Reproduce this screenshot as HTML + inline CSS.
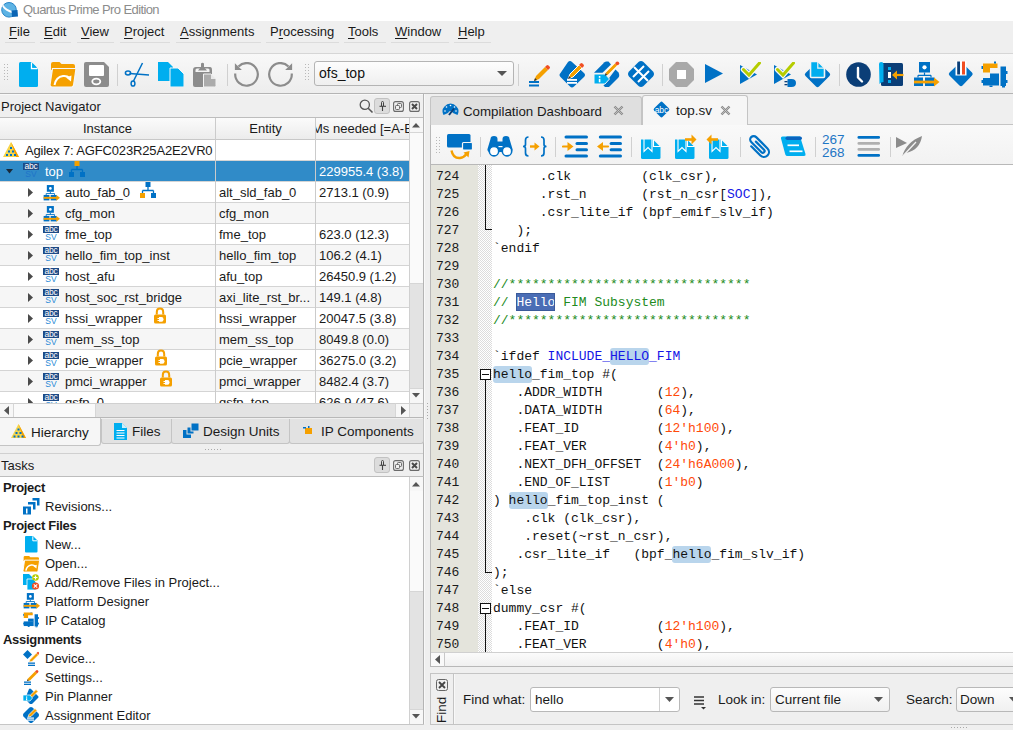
<!DOCTYPE html><html><head><meta charset="utf-8"><style>
*{box-sizing:border-box}
body{margin:0;width:1013px;height:730px;position:relative;overflow:hidden;background:#efefef;font-family:"Liberation Sans",sans-serif;font-size:13px;color:#1a1a1a}
.mono{font-family:"Liberation Mono",monospace;font-size:13px}
u{text-decoration:underline;text-decoration-thickness:1px;text-underline-offset:1.5px}
</style></head><body>
<div style="position:absolute;left:0px;top:0px;width:1013px;height:21px;background:#fff"></div>
<svg style="position:absolute;left:1px;top:1px" width="18" height="18" viewBox="0 0 18 18"><circle cx="8" cy="8.8" r="7.3" fill="#5db3e4" stroke="#2a86c8" stroke-width="1"/><path d="M2 3.5 Q5 8.5 12.5 10.5 L12 12.5 Q4.5 10.5 1.2 5.5Z" fill="#fff"/><path d="M10.5 9.5 L16.5 9 L17 15.5 L11 16Z" fill="#0a64b4"/></svg>
<div style="position:absolute;left:23px;top:1px;white-space:pre;font-size:13px;line-height:18px;color:#8c8c8c;letter-spacing:-0.6px">Quartus Prime Pro Edition</div>
<div style="position:absolute;left:0px;top:21px;width:1013px;height:32px;background:#efefef"></div>
<div style="position:absolute;left:9px;top:23px;white-space:pre;font-size:13px;line-height:17px;color:#1a1a1a"><u>F</u>ile</div>
<div style="position:absolute;left:44px;top:23px;white-space:pre;font-size:13px;line-height:17px;color:#1a1a1a"><u>E</u>dit</div>
<div style="position:absolute;left:81px;top:23px;white-space:pre;font-size:13px;line-height:17px;color:#1a1a1a"><u>V</u>iew</div>
<div style="position:absolute;left:124px;top:23px;white-space:pre;font-size:13px;line-height:17px;color:#1a1a1a"><u>P</u>roject</div>
<div style="position:absolute;left:180px;top:23px;white-space:pre;font-size:13px;line-height:17px;color:#1a1a1a"><u>A</u>ssignments</div>
<div style="position:absolute;left:270px;top:23px;white-space:pre;font-size:13px;line-height:17px;color:#1a1a1a">P<u>r</u>ocessing</div>
<div style="position:absolute;left:348px;top:23px;white-space:pre;font-size:13px;line-height:17px;color:#1a1a1a"><u>T</u>ools</div>
<div style="position:absolute;left:395px;top:23px;white-space:pre;font-size:13px;line-height:17px;color:#1a1a1a"><u>W</u>indow</div>
<div style="position:absolute;left:458px;top:23px;white-space:pre;font-size:13px;line-height:17px;color:#1a1a1a"><u>H</u>elp</div>
<div style="position:absolute;left:5px;top:42px;width:30px;height:1px;background:#dcdcdc"></div>
<div style="position:absolute;left:40px;top:42px;width:31px;height:1px;background:#dcdcdc"></div>
<div style="position:absolute;left:77px;top:42px;width:37px;height:1px;background:#dcdcdc"></div>
<div style="position:absolute;left:120px;top:42px;width:50px;height:1px;background:#dcdcdc"></div>
<div style="position:absolute;left:176px;top:42px;width:85px;height:1px;background:#dcdcdc"></div>
<div style="position:absolute;left:266px;top:42px;width:73px;height:1px;background:#dcdcdc"></div>
<div style="position:absolute;left:344px;top:42px;width:42px;height:1px;background:#dcdcdc"></div>
<div style="position:absolute;left:391px;top:42px;width:58px;height:1px;background:#dcdcdc"></div>
<div style="position:absolute;left:454px;top:42px;width:37px;height:1px;background:#dcdcdc"></div>
<div style="position:absolute;left:0px;top:53px;width:1013px;height:1px;background:#d6d6d6"></div>
<div style="position:absolute;left:0px;top:54px;width:1013px;height:39px;background:linear-gradient(#f8f8f8,#ededed)"></div>
<div style="position:absolute;left:0px;top:93px;width:1013px;height:1px;background:#b4b4b4"></div>
<svg style="position:absolute;left:4px;top:64px" width="4" height="18" viewBox="0 0 4 18"><rect x="0" y="0" width="1" height="1" fill="#b8b8b8"/><rect x="3" y="0" width="1" height="1" fill="#b8b8b8"/><rect x="0" y="3" width="1" height="1" fill="#b8b8b8"/><rect x="3" y="3" width="1" height="1" fill="#b8b8b8"/><rect x="0" y="6" width="1" height="1" fill="#b8b8b8"/><rect x="3" y="6" width="1" height="1" fill="#b8b8b8"/><rect x="0" y="9" width="1" height="1" fill="#b8b8b8"/><rect x="3" y="9" width="1" height="1" fill="#b8b8b8"/><rect x="0" y="12" width="1" height="1" fill="#b8b8b8"/><rect x="3" y="12" width="1" height="1" fill="#b8b8b8"/><rect x="0" y="15" width="1" height="1" fill="#b8b8b8"/><rect x="3" y="15" width="1" height="1" fill="#b8b8b8"/></svg>
<svg style="position:absolute;left:19px;top:62px" width="20" height="26" viewBox="0 0 20 26"><path d="M1.5 0 H12 L19 7 V23.5 Q19 25 17.5 25 H1.5 Q0 25 0 23.5 V1.5 Q0 0 1.5 0Z" fill="#00aeef"/><path d="M12.5 0.5 V6.5 H18.5" stroke="#fff" stroke-width="1.3" fill="none"/><path d="M13.3 0.8 L18.2 5.7 H13.3Z" fill="#00aeef"/></svg>
<svg style="position:absolute;left:50px;top:62px" width="27" height="26" viewBox="0 0 27 26"><path d="M1 2 Q1 0 3 0 H9.5 L11.5 2 H23 Q25 2 25 4 V8 H1Z" fill="#f5a000"/><path d="M2.5 6.5 H26 L23.5 23.5 Q23 25 21.5 25 H2 Q0 25 0 23Z" fill="#f5a000" stroke="#f6f6f6" stroke-width="1.2"/><path d="M4.5 23 Q6 15 13 14 Q17 13.5 19.5 16" stroke="#fff" stroke-width="2" fill="none"/><path d="M16 15.5 L21.5 13.5 L21 19.5Z" fill="#fff"/></svg>
<svg style="position:absolute;left:84px;top:62px" width="25" height="25" viewBox="0 0 25 25"><path d="M2 0 H20 L25 5 V23 Q25 25 23 25 H2 Q0 25 0 23 V2 Q0 0 2 0Z" fill="#8c8c8c"/><rect x="5" y="3" width="15" height="11" rx="1" fill="#fff"/><ellipse cx="12.3" cy="19.5" rx="4" ry="2.8" fill="none" stroke="#fff" stroke-width="1.8"/></svg>
<div style="position:absolute;left:117px;top:64px;width:1px;height:22px;background:#d0d0d0"></div>
<svg style="position:absolute;left:124px;top:61px" width="27" height="27" viewBox="0 0 27 27"><g stroke="#0071c5" stroke-width="1.5" fill="none"><path d="M18.5 2 L9.5 20"/><path d="M5.5 12.5 L25 14"/><ellipse cx="4" cy="12" rx="2.6" ry="1.9"/><ellipse cx="9" cy="22.5" rx="1.9" ry="2.6"/></g></svg>
<svg style="position:absolute;left:158px;top:62px" width="26" height="25" viewBox="0 0 26 25"><path d="M0 0 H10 L15 5 V19 H0Z" fill="#00aeef"/><path d="M12 6 H20 L26 12 V25 H12Z" fill="#00aeef" stroke="#f6f6f6" stroke-width="1"/></svg>
<svg style="position:absolute;left:192px;top:62px" width="25" height="25" viewBox="0 0 25 25"><path d="M1 8 Q1 5 4 5 H18 Q20 5 20 8 V23 Q20 25 18 25 H3 Q1 25 1 23Z" fill="#8c8c8c"/><path d="M3.5 8 Q3.5 6.5 5 6.5 H16 Q17.5 6.5 17.5 8 V10 H3.5Z" fill="#f4f4f4"/><path d="M6 8.5 L9 5 V1.5 Q10.5 0 12 1.5 V5 L15 8.5Z" fill="#8c8c8c"/><path d="M11.5 12 H19 L24 17 V23.5 Q24 25 22.5 25 H11.5Z" fill="#ababab" stroke="#f2f2f2" stroke-width="1"/><path d="M19 12 V17 H24" fill="#e8e8e8"/></svg>
<div style="position:absolute;left:227px;top:64px;width:1px;height:22px;background:#d0d0d0"></div>
<svg style="position:absolute;left:233px;top:62px" width="27" height="26" viewBox="0 0 27 26"><path d="M2.24 11.5 A11.3 11.3 0 1 0 5.51 4.41" stroke="#8c8c8c" stroke-width="2.2" fill="none"/><path d="M1.9 1.3 L1.9 7.9 L8.9 7.9Z" fill="#8c8c8c"/></svg>
<svg style="position:absolute;left:267px;top:62px" width="27" height="26" viewBox="0 0 27 26"><path d="M24.76 11.5 A11.3 11.3 0 1 1 21.49 4.41" stroke="#8c8c8c" stroke-width="2.2" fill="none"/><path d="M25.1 1.3 L25.1 7.9 L18.1 7.9Z" fill="#8c8c8c"/></svg>
<svg style="position:absolute;left:305px;top:64px" width="4" height="18" viewBox="0 0 4 18"><rect x="0" y="0" width="1" height="1" fill="#b8b8b8"/><rect x="3" y="0" width="1" height="1" fill="#b8b8b8"/><rect x="0" y="3" width="1" height="1" fill="#b8b8b8"/><rect x="3" y="3" width="1" height="1" fill="#b8b8b8"/><rect x="0" y="6" width="1" height="1" fill="#b8b8b8"/><rect x="3" y="6" width="1" height="1" fill="#b8b8b8"/><rect x="0" y="9" width="1" height="1" fill="#b8b8b8"/><rect x="3" y="9" width="1" height="1" fill="#b8b8b8"/><rect x="0" y="12" width="1" height="1" fill="#b8b8b8"/><rect x="3" y="12" width="1" height="1" fill="#b8b8b8"/><rect x="0" y="15" width="1" height="1" fill="#b8b8b8"/><rect x="3" y="15" width="1" height="1" fill="#b8b8b8"/></svg>
<div style="position:absolute;left:314px;top:61px;width:200px;height:25px;background:linear-gradient(#fdfdfd,#efefef);border:1px solid #b4b4b4;border-radius:3px"></div>
<div style="position:absolute;left:319px;top:65px;white-space:pre;font-size:14px;line-height:16px;color:#111">ofs_top</div>
<svg style="position:absolute;left:497px;top:71px" width="10" height="6" viewBox="0 0 10 6"><path d="M0 0 H10 L5 5Z" fill="#555"/></svg>
<div style="position:absolute;left:518px;top:64px;width:1px;height:22px;background:#d0d0d0"></div>
<svg style="position:absolute;left:528px;top:62px" width="22" height="25" viewBox="0 0 22 25"><g transform="translate(6,5) scale(1)"><path d="M0 14 L2 9 L11 0 L14 3 L5 12Z" fill="#f5a000" /><path d="M11 0 L12.5 -1.5 Q13.5 -2.5 14.5 -1.5 L15.5 -0.5 Q16.5 0.5 15.5 1.5 L14 3Z" fill="#f04e23"/><path d="M0 14 L1 11 L3 13Z" fill="#333"/></g><rect x="1" y="19" width="10" height="2" fill="#0071c5"/><rect x="1" y="22.5" width="10" height="2" fill="#0071c5"/></svg>
<svg style="position:absolute;left:559px;top:61px" width="27" height="27" viewBox="0 0 27 27"><path d="M9 1 Q11 -1 13 1 L25 12 Q27 14 25 16 L15 25.5 Q13 27.5 11 25.5 L1.5 16 Q-0.5 14 1.5 12Z" fill="#0071c5"/><g transform="translate(9,4) scale(1)"><path d="M0 14 L2 9 L11 0 L14 3 L5 12Z" fill="#f5a000" stroke="#fff" stroke-width="1"/><path d="M11 0 L12.5 -1.5 Q13.5 -2.5 14.5 -1.5 L15.5 -0.5 Q16.5 0.5 15.5 1.5 L14 3Z" fill="#f04e23"/><path d="M0 14 L1 11 L3 13Z" fill="#333"/></g><rect x="8" y="18" width="10" height="1.8" fill="#fff"/><rect x="8" y="21" width="10" height="1.8" fill="#fff"/></svg>
<svg style="position:absolute;left:590px;top:58px" width="32" height="32" viewBox="0 0 32 32"><path d="M4 14.8 L14.5 4.2 Q15.3 3.5 16.5 3.5 H18.5 L21 6.5 L12.5 14.8Z" fill="#0071c5"/><path d="M13.5 27.5 L25.5 11.5 L28.5 14.5 Q29.2 15.5 29.2 17 V18 Q29 19 28 20 L19.5 28.5 Q18.8 29 17.8 29 H15Z" fill="#0071c5"/><path d="M4 16 H15 L19.5 21 L15 26 H4Z" fill="#00aeef" stroke="#f4f4f4" stroke-width="1"/><rect x="8.8" y="18" width="1.6" height="1.8" fill="#fff"/><rect x="8.8" y="20.8" width="1.6" height="3.5" fill="#fff"/><path d="M16 16.5 L26 6.5" stroke="#fff" stroke-width="5"/><path d="M16.5 16 L26 6.5" stroke="#f5a000" stroke-width="3"/><circle cx="27.3" cy="5.3" r="1.9" fill="#f04e23"/><path d="M14.8 17.8 L15.5 15 L17.5 17Z" fill="#333"/></svg>
<svg style="position:absolute;left:628px;top:61px" width="26" height="27" viewBox="0 0 26 27"><path d="M10.5 1 Q13 -1 15.5 1 L25 10.5 Q27 13 25 15.5 L15.5 25 Q13 27 10.5 25 L1 15.5 Q-1 13 1 10.5Z" fill="#0071c5"/><path d="M6 6 L20 20 M5 16 L16 5 M10 21 L21 10" stroke="#fff" stroke-width="2"/></svg>
<div style="position:absolute;left:662px;top:64px;width:1px;height:22px;background:#d0d0d0"></div>
<svg style="position:absolute;left:669px;top:62px" width="25" height="25" viewBox="0 0 25 25"><path d="M7 0 H18 L25 7 V18 L18 25 H7 L0 18 V7Z" fill="#a9a9a9"/><rect x="8" y="8" width="9" height="9" fill="#fff"/></svg>
<svg style="position:absolute;left:705px;top:64px" width="19" height="20" viewBox="0 0 19 20"><path d="M0 0 L18 9.5 L0 19Z" fill="#0071c5"/></svg>
<svg style="position:absolute;left:739px;top:62px" width="25" height="26" viewBox="0 0 25 26"><path d="M1 3 L1 22 L18 12.5 Z" fill="#0071c5"/><path d="M4.5 7.5 L10 13 L20.5 1" stroke="#f6f6f6" stroke-width="5.5" fill="none" stroke-linecap="round"/><path d="M4.5 7.5 L10 13 L20.5 1" stroke="#b5cc00" stroke-width="3" fill="none" stroke-linecap="round"/></svg>
<svg style="position:absolute;left:773px;top:62px" width="25" height="26" viewBox="0 0 25 26"><path d="M1 3 L1 22 L18 12.5 Z" fill="#0071c5"/><path d="M4.5 7.5 L10 13 L20.5 1" stroke="#f6f6f6" stroke-width="5.5" fill="none" stroke-linecap="round"/><path d="M4.5 7.5 L10 13 L20.5 1" stroke="#b5cc00" stroke-width="3" fill="none" stroke-linecap="round"/><path d="M14.5 17 H18.5 Q23 17 23 21 Q23 25 18.5 25 H14.5Z" fill="#0071c5"/><rect x="11.5" y="19" width="3" height="1.3" fill="#0b3e77"/><rect x="11.5" y="22" width="3" height="1.3" fill="#0b3e77"/></svg>
<svg style="position:absolute;left:804px;top:58px" width="28" height="32" viewBox="0 0 28 32"><path d="M12 5 Q13.5 3.5 15 5 L25.5 15 Q27 16.5 25.5 18 L15 28.5 Q13.5 30 12 28.5 L1.5 18 Q0 16.5 1.5 15Z" fill="#0071c5"/><path d="M6.5 3.5 H14 L20.5 10 V18.5 Q20.5 19.5 19.5 19.5 H7.5 Q6.5 19.5 6.5 18.5Z" fill="#00aeef" stroke="#f4f4f4" stroke-width="1.6"/><path d="M13.8 3.5 V10.2 H20.5" stroke="#f4f4f4" stroke-width="1.2" fill="none"/></svg>
<div style="position:absolute;left:839px;top:64px;width:1px;height:22px;background:#d0d0d0"></div>
<svg style="position:absolute;left:846px;top:62px" width="26" height="25" viewBox="0 0 26 25"><circle cx="12.5" cy="12.5" r="12.3" fill="#0b3e77"/><path d="M12 6 V15.5 L16 19.5" stroke="#fff" stroke-width="2.4" fill="none" stroke-linecap="round" stroke-linejoin="round"/></svg>
<svg style="position:absolute;left:879px;top:62px" width="26" height="25" viewBox="0 0 26 25"><rect x="2" y="1" width="22" height="23" rx="1.5" fill="#0b3e77"/><path d="M0 2 Q0 0 2.2 0 Q4.5 0 4.5 2 V20 Q2 20 0.5 22Z" fill="#00aeef"/><rect x="9" y="5" width="3" height="3" fill="#00aeef"/><rect x="9" y="10" width="3" height="6" fill="#fff"/><rect x="9" y="18" width="3" height="3" fill="#00aeef"/><path d="M16 13 H24.5" stroke="#f5a000" stroke-width="2.2"/><path d="M13 13 L18 8.5 V17.5Z" fill="#f5a000"/></svg>
<svg style="position:absolute;left:913px;top:61px" width="27" height="27" viewBox="0 0 27 27"><rect x="6" y="1" width="11" height="10.5" fill="#0071c5"/><circle cx="11.5" cy="6.3" r="2.1" fill="#fff"/><path d="M11.5 11.5 V14.3 M5 14.3 H18 M5 14.3 V16.5 M18 14.3 V16.5" stroke="#0071c5" stroke-width="1.2" fill="none"/><rect x="1" y="16.5" width="9" height="8.5" fill="#0071c5"/><rect x="12" y="16.5" width="9.5" height="8.5" fill="#0071c5"/><path d="M1 21 H22" stroke="#f5a000" stroke-width="2.8"/><path d="M21 16.5 L26.5 21 L21 25.5Z" fill="#f5a000"/></svg>
<svg style="position:absolute;left:947px;top:58px" width="28" height="30" viewBox="0 0 28 30"><path d="M12.5 5 Q14 3.5 15.5 5 L25 14.5 Q26.5 16 25 17.5 L15.5 27.5 Q14 29 12.5 27.5 L2.5 17.5 Q1 16 2.5 14.5Z" fill="#0071c5"/><rect x="8.5" y="3" width="11" height="14.5" fill="#fff"/><rect x="10.2" y="3.5" width="2.8" height="13" fill="#0b3e77"/><rect x="15" y="3.5" width="3" height="13" fill="#f04e23"/></svg>
<svg style="position:absolute;left:981px;top:58px" width="28" height="32" viewBox="0 0 28 32"><path d="M2 5.5 H16.5 V10 H9 V14.5 H2Z" fill="#f5a000"/><rect x="19.5" y="8.5" width="5.5" height="19.5" fill="#0071c5"/><rect x="2" y="20" width="16" height="7.5" fill="#0071c5"/><rect x="9" y="15.5" width="9" height="5" fill="#0071c5"/><g fill="#0071c5"><rect x="25" y="13" width="1.5" height="3"/><rect x="25" y="22" width="1.5" height="3"/><rect x="0.5" y="22" width="1.5" height="3"/><rect x="8.5" y="27.5" width="3" height="1.5"/><rect x="21" y="28" width="3" height="1.5"/><rect x="13" y="3.5" width="2" height="2"/></g><rect x="0.5" y="8" width="1.5" height="3" fill="#0071c5"/></svg>
<div style="position:absolute;left:0px;top:94px;width:423px;height:1px;background:#f8f8f8"></div>
<div style="position:absolute;left:0px;top:95px;width:423px;height:22px;background:#efefef"></div>
<div style="position:absolute;left:1px;top:99px;white-space:pre;font-size:13px;line-height:16px;color:#1a1a1a">Project Navigator</div>
<div style="position:absolute;left:423px;top:94px;width:1px;height:630px;background:#b4b4b4"></div>
<div style="position:absolute;left:424px;top:94px;width:1px;height:630px;background:#f8f8f8"></div>
<svg style="position:absolute;left:359px;top:99px" width="15" height="15" viewBox="0 0 15 15"><circle cx="5.8" cy="5.8" r="4.6" stroke="#555" stroke-width="1.3" fill="none"/><path d="M9.2 9.2 L13.5 13.5" stroke="#555" stroke-width="1.6"/></svg><div style="position:absolute;left:374px;top:98px;width:16px;height:16px;background:#dcdcdc;border:1px solid #c2c2c2;border-radius:3px"></div><svg style="position:absolute;left:379px;top:101px" width="8" height="10" viewBox="0 0 8 10"><path d="M3.5 5 V10" stroke="#444" stroke-width="1.1"/><path d="M0.5 5.3 H7" stroke="#444" stroke-width="1.1"/><path d="M2.5 5 V1.5 Q2.5 0.5 3.5 0.5 Q4.5 0.5 4.5 1.5 V5" stroke="#444" stroke-width="1" fill="none"/></svg><svg style="position:absolute;left:393px;top:101px" width="11" height="11" viewBox="0 0 11 11"><rect x="0.6" y="0.6" width="9.8" height="9.8" rx="2" fill="none" stroke="#6a6a6a" stroke-width="1.1"/><rect x="4.5" y="2.5" width="4" height="4" rx=".8" fill="none" stroke="#6a6a6a" stroke-width="1"/><rect x="2.5" y="4.5" width="4" height="4" rx=".8" fill="#efefef" stroke="#6a6a6a" stroke-width="1"/></svg><svg style="position:absolute;left:409px;top:101px" width="11" height="11" viewBox="0 0 11 11"><rect x="0.6" y="0.6" width="9.8" height="9.8" rx="2" fill="none" stroke="#6a6a6a" stroke-width="1.1"/><path d="M3 3 L8 8 M8 3 L3 8" stroke="#4a4a4a" stroke-width="2"/></svg>
<div style="position:absolute;left:0px;top:117px;width:423px;height:1px;background:#bdbdbd"></div>
<div style="position:absolute;left:0px;top:118px;width:409px;height:21px;background:linear-gradient(#fbfbfb,#ececec)"></div>
<div style="position:absolute;left:0px;top:139px;width:409px;height:1px;background:#c8c8c8"></div>
<div style="position:absolute;left:215px;top:118px;width:1px;height:285px;background:#cbcbcb"></div>
<div style="position:absolute;left:315px;top:118px;width:1px;height:285px;background:#cbcbcb"></div>
<div style="position:absolute;left:0px;top:121px;white-space:pre;width:215px;text-align:center;font-size:13px;line-height:16px">Instance</div>
<div style="position:absolute;left:216px;top:121px;white-space:pre;width:99px;text-align:center;font-size:13px;line-height:16px">Entity</div>
<div style="position:absolute;left:316px;top:118px;width:93px;height:21px;overflow:hidden"><div style="position:absolute;left:-4px;top:3px;white-space:pre;line-height:16px">Ms needed [=A-B]</div></div>
<div style="position:absolute;left:0px;top:140px;width:409px;height:263px;overflow:hidden"></div>
<div style="position:absolute;left:0;top:0;width:409px;height:403px;overflow:hidden;clip-path:inset(140px 0 0 0)"><div style="position:absolute;left:0px;top:140px;width:409px;height:20px;background:#ffffff"></div><div style="position:absolute;left:0px;top:160px;width:409px;height:1px;background:#d4d4d4"></div><svg style="position:absolute;left:3px;top:142px" width="17" height="16" viewBox="0 0 17 16"><path d="M8 0 L16 15 H0Z" fill="#f7d54a"/><path d="M8 0 L16 15 H13Z" fill="#f5a000"/><g fill="#0071c5"><rect x="7" y="5" width="2" height="2"/><rect x="5" y="8.5" width="2" height="2"/><rect x="9" y="8.5" width="2" height="2"/><rect x="3" y="12" width="2" height="2"/><rect x="7" y="12" width="2" height="2"/><rect x="11" y="12" width="2" height="2"/></g></svg><div style="position:absolute;left:25px;top:142px;white-space:pre;line-height:17px;color:#1a1a1a;letter-spacing:-0.15px">Agilex 7: AGFC023R25A2E2VR0</div><div style="position:absolute;left:215px;top:140px;width:1px;height:21px;background:#cbcbcb"></div><div style="position:absolute;left:315px;top:140px;width:1px;height:21px;background:#cbcbcb"></div><div style="position:absolute;left:0px;top:161px;width:409px;height:20px;background:#308bc8"></div><div style="position:absolute;left:0px;top:181px;width:409px;height:1px;background:#d4d4d4"></div><svg style="position:absolute;left:6px;top:169px" width="8" height="5" viewBox="0 0 8 5"><path d="M0 0 H7 L3.5 4.5Z" fill="#1a2a3a"/></svg><svg style="position:absolute;left:23px;top:163px" width="16" height="16" viewBox="0 0 16 16"><rect x="0" y="0" width="16" height="7" fill="#1d4a86"/><text x="8" y="6.3" font-family="Liberation Sans" font-size="8.5" fill="#fff" text-anchor="middle" letter-spacing="-0.2">abc</text><text x="8" y="14" font-family="Liberation Sans" font-size="8.5" fill="#1f74c8" text-anchor="middle">SV</text></svg><div style="position:absolute;left:45px;top:163px;white-space:pre;line-height:17px;color:#fff">top</div><svg style="position:absolute;left:69px;top:161px" width="16" height="17" viewBox="0 0 16 17"><rect x="5.5" y="0" width="5" height="5" fill="#f5a000"/><path d="M8 5 V8.5 M2.5 8.5 H13.5 M2.5 8.5 V11 M13.5 8.5 V11" stroke="#0071c5" stroke-width="1.3" fill="none"/><rect x="0" y="11" width="5" height="5" fill="#0071c5"/><rect x="11" y="11" width="5" height="5" fill="#0071c5"/></svg><div style="position:absolute;left:319px;top:163px;white-space:pre;line-height:17px;color:#fff">229955.4 (3.8)</div><div style="position:absolute;left:215px;top:161px;width:1px;height:21px;background:#cbcbcb"></div><div style="position:absolute;left:315px;top:161px;width:1px;height:21px;background:#cbcbcb"></div><div style="position:absolute;left:0px;top:182px;width:409px;height:20px;background:#ffffff"></div><div style="position:absolute;left:0px;top:202px;width:409px;height:1px;background:#d4d4d4"></div><svg style="position:absolute;left:28px;top:188px" width="5" height="9" viewBox="0 0 5 9"><path d="M0 0 L5 4.5 L0 9Z" fill="#4a4a4a"/></svg><svg style="position:absolute;left:43px;top:185px" width="17" height="17" viewBox="0 0 17 17"><g transform="translate(0,-0.6) scale(0.64)"><rect x="6" y="1" width="11" height="10.5" fill="#0071c5"/><circle cx="11.5" cy="6.3" r="2.1" fill="#fff"/><path d="M11.5 11.5 V14.3 M5 14.3 H18 M5 14.3 V16.5 M18 14.3 V16.5" stroke="#0071c5" stroke-width="1.4" fill="none"/><rect x="1" y="16.5" width="9" height="8.5" fill="#0071c5"/><rect x="12" y="16.5" width="9.5" height="8.5" fill="#0071c5"/><path d="M1 21 H22" stroke="#f5a000" stroke-width="3"/><path d="M21 16.5 L26.5 21 L21 25.5Z" fill="#f5a000"/></g></svg><div style="position:absolute;left:65px;top:184px;white-space:pre;line-height:17px;color:#1a1a1a">auto_fab_0</div><svg style="position:absolute;left:140px;top:182px" width="16" height="17" viewBox="0 0 16 17"><rect x="5.5" y="0" width="5" height="5" fill="#0071c5"/><path d="M8 5 V8.5 M2.5 8.5 H13.5 M2.5 8.5 V11 M13.5 8.5 V11" stroke="#0071c5" stroke-width="1.3" fill="none"/><rect x="0" y="11" width="5" height="5" fill="#f5a000"/><rect x="11" y="11" width="5" height="5" fill="#0071c5"/></svg><div style="position:absolute;left:219px;top:184px;white-space:pre;line-height:17px;color:#1a1a1a">alt_sld_fab_0</div><div style="position:absolute;left:319px;top:184px;white-space:pre;line-height:17px;color:#1a1a1a">2713.1 (0.9)</div><div style="position:absolute;left:215px;top:182px;width:1px;height:21px;background:#cbcbcb"></div><div style="position:absolute;left:315px;top:182px;width:1px;height:21px;background:#cbcbcb"></div><div style="position:absolute;left:0px;top:203px;width:409px;height:20px;background:#f6f6f6"></div><div style="position:absolute;left:0px;top:223px;width:409px;height:1px;background:#d4d4d4"></div><svg style="position:absolute;left:28px;top:209px" width="5" height="9" viewBox="0 0 5 9"><path d="M0 0 L5 4.5 L0 9Z" fill="#4a4a4a"/></svg><svg style="position:absolute;left:43px;top:206px" width="17" height="17" viewBox="0 0 17 17"><g transform="translate(0,-0.6) scale(0.64)"><rect x="6" y="1" width="11" height="10.5" fill="#0071c5"/><circle cx="11.5" cy="6.3" r="2.1" fill="#fff"/><path d="M11.5 11.5 V14.3 M5 14.3 H18 M5 14.3 V16.5 M18 14.3 V16.5" stroke="#0071c5" stroke-width="1.4" fill="none"/><rect x="1" y="16.5" width="9" height="8.5" fill="#0071c5"/><rect x="12" y="16.5" width="9.5" height="8.5" fill="#0071c5"/><path d="M1 21 H22" stroke="#f5a000" stroke-width="3"/><path d="M21 16.5 L26.5 21 L21 25.5Z" fill="#f5a000"/></g></svg><div style="position:absolute;left:65px;top:205px;white-space:pre;line-height:17px;color:#1a1a1a">cfg_mon</div><div style="position:absolute;left:219px;top:205px;white-space:pre;line-height:17px;color:#1a1a1a">cfg_mon</div><div style="position:absolute;left:215px;top:203px;width:1px;height:21px;background:#cbcbcb"></div><div style="position:absolute;left:315px;top:203px;width:1px;height:21px;background:#cbcbcb"></div><div style="position:absolute;left:0px;top:224px;width:409px;height:20px;background:#ffffff"></div><div style="position:absolute;left:0px;top:244px;width:409px;height:1px;background:#d4d4d4"></div><svg style="position:absolute;left:28px;top:230px" width="5" height="9" viewBox="0 0 5 9"><path d="M0 0 L5 4.5 L0 9Z" fill="#4a4a4a"/></svg><svg style="position:absolute;left:43px;top:226px" width="16" height="16" viewBox="0 0 16 16"><rect x="0" y="0" width="16" height="7" fill="#1d4a86"/><text x="8" y="6.3" font-family="Liberation Sans" font-size="8.5" fill="#fff" text-anchor="middle" letter-spacing="-0.2">abc</text><text x="8" y="14" font-family="Liberation Sans" font-size="8.5" fill="#2a8ad6" text-anchor="middle">SV</text></svg><div style="position:absolute;left:65px;top:226px;white-space:pre;line-height:17px;color:#1a1a1a">fme_top</div><div style="position:absolute;left:219px;top:226px;white-space:pre;line-height:17px;color:#1a1a1a">fme_top</div><div style="position:absolute;left:319px;top:226px;white-space:pre;line-height:17px;color:#1a1a1a">623.0 (12.3)</div><div style="position:absolute;left:215px;top:224px;width:1px;height:21px;background:#cbcbcb"></div><div style="position:absolute;left:315px;top:224px;width:1px;height:21px;background:#cbcbcb"></div><div style="position:absolute;left:0px;top:245px;width:409px;height:20px;background:#f6f6f6"></div><div style="position:absolute;left:0px;top:265px;width:409px;height:1px;background:#d4d4d4"></div><svg style="position:absolute;left:28px;top:251px" width="5" height="9" viewBox="0 0 5 9"><path d="M0 0 L5 4.5 L0 9Z" fill="#4a4a4a"/></svg><svg style="position:absolute;left:43px;top:247px" width="16" height="16" viewBox="0 0 16 16"><rect x="0" y="0" width="16" height="7" fill="#1d4a86"/><text x="8" y="6.3" font-family="Liberation Sans" font-size="8.5" fill="#fff" text-anchor="middle" letter-spacing="-0.2">abc</text><text x="8" y="14" font-family="Liberation Sans" font-size="8.5" fill="#2a8ad6" text-anchor="middle">SV</text></svg><div style="position:absolute;left:65px;top:247px;white-space:pre;line-height:17px;color:#1a1a1a">hello_fim_top_inst</div><div style="position:absolute;left:219px;top:247px;white-space:pre;line-height:17px;color:#1a1a1a">hello_fim_top</div><div style="position:absolute;left:319px;top:247px;white-space:pre;line-height:17px;color:#1a1a1a">106.2 (4.1)</div><div style="position:absolute;left:215px;top:245px;width:1px;height:21px;background:#cbcbcb"></div><div style="position:absolute;left:315px;top:245px;width:1px;height:21px;background:#cbcbcb"></div><div style="position:absolute;left:0px;top:266px;width:409px;height:20px;background:#ffffff"></div><div style="position:absolute;left:0px;top:286px;width:409px;height:1px;background:#d4d4d4"></div><svg style="position:absolute;left:28px;top:272px" width="5" height="9" viewBox="0 0 5 9"><path d="M0 0 L5 4.5 L0 9Z" fill="#4a4a4a"/></svg><svg style="position:absolute;left:43px;top:268px" width="16" height="16" viewBox="0 0 16 16"><rect x="0" y="0" width="16" height="7" fill="#1d4a86"/><text x="8" y="6.3" font-family="Liberation Sans" font-size="8.5" fill="#fff" text-anchor="middle" letter-spacing="-0.2">abc</text><text x="8" y="14" font-family="Liberation Sans" font-size="8.5" fill="#2a8ad6" text-anchor="middle">SV</text></svg><div style="position:absolute;left:65px;top:268px;white-space:pre;line-height:17px;color:#1a1a1a">host_afu</div><div style="position:absolute;left:219px;top:268px;white-space:pre;line-height:17px;color:#1a1a1a">afu_top</div><div style="position:absolute;left:319px;top:268px;white-space:pre;line-height:17px;color:#1a1a1a">26450.9 (1.2)</div><div style="position:absolute;left:215px;top:266px;width:1px;height:21px;background:#cbcbcb"></div><div style="position:absolute;left:315px;top:266px;width:1px;height:21px;background:#cbcbcb"></div><div style="position:absolute;left:0px;top:287px;width:409px;height:20px;background:#f6f6f6"></div><div style="position:absolute;left:0px;top:307px;width:409px;height:1px;background:#d4d4d4"></div><svg style="position:absolute;left:28px;top:293px" width="5" height="9" viewBox="0 0 5 9"><path d="M0 0 L5 4.5 L0 9Z" fill="#4a4a4a"/></svg><svg style="position:absolute;left:43px;top:289px" width="16" height="16" viewBox="0 0 16 16"><rect x="0" y="0" width="16" height="7" fill="#1d4a86"/><text x="8" y="6.3" font-family="Liberation Sans" font-size="8.5" fill="#fff" text-anchor="middle" letter-spacing="-0.2">abc</text><text x="8" y="14" font-family="Liberation Sans" font-size="8.5" fill="#2a8ad6" text-anchor="middle">SV</text></svg><div style="position:absolute;left:65px;top:289px;white-space:pre;line-height:17px;color:#1a1a1a">host_soc_rst_bridge</div><div style="position:absolute;left:219px;top:289px;white-space:pre;line-height:17px;color:#1a1a1a">axi_lite_rst_br...</div><div style="position:absolute;left:319px;top:289px;white-space:pre;line-height:17px;color:#1a1a1a">149.1 (4.8)</div><div style="position:absolute;left:215px;top:287px;width:1px;height:21px;background:#cbcbcb"></div><div style="position:absolute;left:315px;top:287px;width:1px;height:21px;background:#cbcbcb"></div><div style="position:absolute;left:0px;top:308px;width:409px;height:20px;background:#ffffff"></div><div style="position:absolute;left:0px;top:328px;width:409px;height:1px;background:#d4d4d4"></div><svg style="position:absolute;left:28px;top:314px" width="5" height="9" viewBox="0 0 5 9"><path d="M0 0 L5 4.5 L0 9Z" fill="#4a4a4a"/></svg><svg style="position:absolute;left:43px;top:310px" width="16" height="16" viewBox="0 0 16 16"><rect x="0" y="0" width="16" height="7" fill="#1d4a86"/><text x="8" y="6.3" font-family="Liberation Sans" font-size="8.5" fill="#fff" text-anchor="middle" letter-spacing="-0.2">abc</text><text x="8" y="14" font-family="Liberation Sans" font-size="8.5" fill="#2a8ad6" text-anchor="middle">SV</text></svg><div style="position:absolute;left:65px;top:310px;white-space:pre;line-height:17px;color:#1a1a1a">hssi_wrapper</div><svg style="position:absolute;left:153px;top:307px" width="14" height="17" viewBox="0 0 14 17"><path d="M3.8 7.5 V5 Q3.8 1.6 7 1.6 Q10.2 1.6 10.2 5 V7.5" stroke="#f5a000" stroke-width="2" fill="none"/><rect x="1" y="7.5" width="12" height="9" rx="1.5" fill="#f5a000"/><path d="M6 10 H8.5 Q10.5 10 10.5 12.3 Q10.5 14.8 8.5 14.8 H6Z" fill="#fff"/><rect x="4.5" y="11" width="1.6" height="1" fill="#fff"/><rect x="4.5" y="13" width="1.6" height="1" fill="#fff"/></svg><div style="position:absolute;left:219px;top:310px;white-space:pre;line-height:17px;color:#1a1a1a">hssi_wrapper</div><div style="position:absolute;left:319px;top:310px;white-space:pre;line-height:17px;color:#1a1a1a">20047.5 (3.8)</div><div style="position:absolute;left:215px;top:308px;width:1px;height:21px;background:#cbcbcb"></div><div style="position:absolute;left:315px;top:308px;width:1px;height:21px;background:#cbcbcb"></div><div style="position:absolute;left:0px;top:329px;width:409px;height:20px;background:#f6f6f6"></div><div style="position:absolute;left:0px;top:349px;width:409px;height:1px;background:#d4d4d4"></div><svg style="position:absolute;left:28px;top:335px" width="5" height="9" viewBox="0 0 5 9"><path d="M0 0 L5 4.5 L0 9Z" fill="#4a4a4a"/></svg><svg style="position:absolute;left:43px;top:331px" width="16" height="16" viewBox="0 0 16 16"><rect x="0" y="0" width="16" height="7" fill="#1d4a86"/><text x="8" y="6.3" font-family="Liberation Sans" font-size="8.5" fill="#fff" text-anchor="middle" letter-spacing="-0.2">abc</text><text x="8" y="14" font-family="Liberation Sans" font-size="8.5" fill="#2a8ad6" text-anchor="middle">SV</text></svg><div style="position:absolute;left:65px;top:331px;white-space:pre;line-height:17px;color:#1a1a1a">mem_ss_top</div><div style="position:absolute;left:219px;top:331px;white-space:pre;line-height:17px;color:#1a1a1a">mem_ss_top</div><div style="position:absolute;left:319px;top:331px;white-space:pre;line-height:17px;color:#1a1a1a">8049.8 (0.0)</div><div style="position:absolute;left:215px;top:329px;width:1px;height:21px;background:#cbcbcb"></div><div style="position:absolute;left:315px;top:329px;width:1px;height:21px;background:#cbcbcb"></div><div style="position:absolute;left:0px;top:350px;width:409px;height:20px;background:#ffffff"></div><div style="position:absolute;left:0px;top:370px;width:409px;height:1px;background:#d4d4d4"></div><svg style="position:absolute;left:28px;top:356px" width="5" height="9" viewBox="0 0 5 9"><path d="M0 0 L5 4.5 L0 9Z" fill="#4a4a4a"/></svg><svg style="position:absolute;left:43px;top:352px" width="16" height="16" viewBox="0 0 16 16"><rect x="0" y="0" width="16" height="7" fill="#1d4a86"/><text x="8" y="6.3" font-family="Liberation Sans" font-size="8.5" fill="#fff" text-anchor="middle" letter-spacing="-0.2">abc</text><text x="8" y="14" font-family="Liberation Sans" font-size="8.5" fill="#2a8ad6" text-anchor="middle">SV</text></svg><div style="position:absolute;left:65px;top:352px;white-space:pre;line-height:17px;color:#1a1a1a">pcie_wrapper</div><svg style="position:absolute;left:154px;top:349px" width="14" height="17" viewBox="0 0 14 17"><path d="M3.8 7.5 V5 Q3.8 1.6 7 1.6 Q10.2 1.6 10.2 5 V7.5" stroke="#f5a000" stroke-width="2" fill="none"/><rect x="1" y="7.5" width="12" height="9" rx="1.5" fill="#f5a000"/><path d="M6 10 H8.5 Q10.5 10 10.5 12.3 Q10.5 14.8 8.5 14.8 H6Z" fill="#fff"/><rect x="4.5" y="11" width="1.6" height="1" fill="#fff"/><rect x="4.5" y="13" width="1.6" height="1" fill="#fff"/></svg><div style="position:absolute;left:219px;top:352px;white-space:pre;line-height:17px;color:#1a1a1a">pcie_wrapper</div><div style="position:absolute;left:319px;top:352px;white-space:pre;line-height:17px;color:#1a1a1a">36275.0 (3.2)</div><div style="position:absolute;left:215px;top:350px;width:1px;height:21px;background:#cbcbcb"></div><div style="position:absolute;left:315px;top:350px;width:1px;height:21px;background:#cbcbcb"></div><div style="position:absolute;left:0px;top:371px;width:409px;height:20px;background:#f6f6f6"></div><div style="position:absolute;left:0px;top:391px;width:409px;height:1px;background:#d4d4d4"></div><svg style="position:absolute;left:28px;top:377px" width="5" height="9" viewBox="0 0 5 9"><path d="M0 0 L5 4.5 L0 9Z" fill="#4a4a4a"/></svg><svg style="position:absolute;left:43px;top:373px" width="16" height="16" viewBox="0 0 16 16"><rect x="0" y="0" width="16" height="7" fill="#1d4a86"/><text x="8" y="6.3" font-family="Liberation Sans" font-size="8.5" fill="#fff" text-anchor="middle" letter-spacing="-0.2">abc</text><text x="8" y="14" font-family="Liberation Sans" font-size="8.5" fill="#2a8ad6" text-anchor="middle">SV</text></svg><div style="position:absolute;left:65px;top:373px;white-space:pre;line-height:17px;color:#1a1a1a">pmci_wrapper</div><svg style="position:absolute;left:159px;top:370px" width="14" height="17" viewBox="0 0 14 17"><path d="M3.8 7.5 V5 Q3.8 1.6 7 1.6 Q10.2 1.6 10.2 5 V7.5" stroke="#f5a000" stroke-width="2" fill="none"/><rect x="1" y="7.5" width="12" height="9" rx="1.5" fill="#f5a000"/><path d="M6 10 H8.5 Q10.5 10 10.5 12.3 Q10.5 14.8 8.5 14.8 H6Z" fill="#fff"/><rect x="4.5" y="11" width="1.6" height="1" fill="#fff"/><rect x="4.5" y="13" width="1.6" height="1" fill="#fff"/></svg><div style="position:absolute;left:219px;top:373px;white-space:pre;line-height:17px;color:#1a1a1a">pmci_wrapper</div><div style="position:absolute;left:319px;top:373px;white-space:pre;line-height:17px;color:#1a1a1a">8482.4 (3.7)</div><div style="position:absolute;left:215px;top:371px;width:1px;height:21px;background:#cbcbcb"></div><div style="position:absolute;left:315px;top:371px;width:1px;height:21px;background:#cbcbcb"></div><div style="position:absolute;left:0px;top:392px;width:409px;height:20px;background:#ffffff"></div><div style="position:absolute;left:0px;top:412px;width:409px;height:1px;background:#d4d4d4"></div><svg style="position:absolute;left:28px;top:398px" width="5" height="9" viewBox="0 0 5 9"><path d="M0 0 L5 4.5 L0 9Z" fill="#4a4a4a"/></svg><svg style="position:absolute;left:43px;top:394px" width="16" height="16" viewBox="0 0 16 16"><rect x="0" y="0" width="16" height="7" fill="#1d4a86"/><text x="8" y="6.3" font-family="Liberation Sans" font-size="8.5" fill="#fff" text-anchor="middle" letter-spacing="-0.2">abc</text><text x="8" y="14" font-family="Liberation Sans" font-size="8.5" fill="#2a8ad6" text-anchor="middle">SV</text></svg><div style="position:absolute;left:65px;top:394px;white-space:pre;line-height:17px;color:#1a1a1a">qsfp_0</div><div style="position:absolute;left:219px;top:394px;white-space:pre;line-height:17px;color:#1a1a1a">qsfp_top</div><div style="position:absolute;left:319px;top:394px;white-space:pre;line-height:17px;color:#1a1a1a">626.9 (47.6)</div><div style="position:absolute;left:215px;top:392px;width:1px;height:21px;background:#cbcbcb"></div><div style="position:absolute;left:315px;top:392px;width:1px;height:21px;background:#cbcbcb"></div></div>
<div style="position:absolute;left:409px;top:118px;width:14px;height:285px;background:#e3e3e3;border-left:1px solid #d0d0d0"></div><div style="position:absolute;left:409px;top:118px;width:14px;height:15px;background:#f7f7f7;border-left:1px solid #d0d0d0;border-bottom:1px solid #d6d6d6"></div><svg style="position:absolute;left:412px;top:123px" width="8" height="5" viewBox="0 0 8 5"><path d="M0 4.5 L4 0 L8 4.5Z" fill="#555"/></svg><div style="position:absolute;left:409px;top:133px;width:14px;height:151px;background:#fafafa;border-left:1px solid #d0d0d0;border-bottom:1px solid #d6d6d6"></div><div style="position:absolute;left:409px;top:388px;width:14px;height:15px;background:#f7f7f7;border-left:1px solid #d0d0d0;border-top:1px solid #d6d6d6"></div><svg style="position:absolute;left:412px;top:393px" width="8" height="5" viewBox="0 0 8 5"><path d="M0 0 L4 4.5 L8 0Z" fill="#555"/></svg>
<div style="position:absolute;left:0px;top:403px;width:423px;height:14px;background:#e3e3e3;border-top:1px solid #d0d0d0"></div>
<div style="position:absolute;left:0px;top:403px;width:14px;height:14px;background:#f7f7f7;border-top:1px solid #d0d0d0;border-right:1px solid #d6d6d6"></div>
<svg style="position:absolute;left:4px;top:406px" width="5" height="9" viewBox="0 0 5 9"><path d="M5 0 L0 4.5 L5 9Z" fill="#555"/></svg>
<div style="position:absolute;left:14px;top:403px;width:82px;height:14px;background:#fafafa;border-top:1px solid #d0d0d0;border-right:1px solid #d6d6d6"></div>
<div style="position:absolute;left:395px;top:403px;width:14px;height:14px;background:#f7f7f7;border-top:1px solid #d0d0d0;border-left:1px solid #d6d6d6"></div>
<svg style="position:absolute;left:401px;top:406px" width="5" height="9" viewBox="0 0 5 9"><path d="M0 0 L5 4.5 L0 9Z" fill="#555"/></svg>
<div style="position:absolute;left:409px;top:403px;width:14px;height:14px;background:#efefef;border-top:1px solid #d0d0d0;border-left:1px solid #d6d6d6"></div>
<div style="position:absolute;left:0px;top:417px;width:423px;height:1px;background:#b8b8b8"></div>
<div style="position:absolute;left:101px;top:419px;width:71px;height:25px;background:#e2e2e2;border:1px solid #c4c4c4;border-top:none;border-radius:0 0 3px 3px"></div>
<div style="position:absolute;left:171px;top:419px;width:119px;height:25px;background:#e2e2e2;border:1px solid #c4c4c4;border-top:none;border-radius:0 0 3px 3px"></div>
<div style="position:absolute;left:289px;top:419px;width:135px;height:25px;background:#e2e2e2;border:1px solid #c4c4c4;border-top:none;border-radius:0 0 3px 3px"></div>
<div style="position:absolute;left:0px;top:418px;width:101px;height:28px;background:#f6f6f6;border:1px solid #c4c4c4;border-top:none;border-left:none;border-radius:0 0 3px 0"></div>
<svg style="position:absolute;left:11px;top:424px" width="16" height="15" viewBox="0 0 16 15"><path d="M7.5 0 L15 14 H0Z" fill="#f7d54a"/><path d="M7.5 0 L15 14 H12Z" fill="#f5a000"/><g fill="#0071c5"><rect x="6.5" y="4.5" width="2" height="2"/><rect x="4.5" y="8" width="2" height="2"/><rect x="8.5" y="8" width="2" height="2"/><rect x="2.5" y="11.5" width="2" height="2"/><rect x="6.5" y="11.5" width="2" height="2"/><rect x="10.5" y="11.5" width="2" height="2"/></g></svg>
<div style="position:absolute;left:31px;top:424px;white-space:pre;line-height:17px;font-size:13.5px">Hierarchy</div>
<svg style="position:absolute;left:114px;top:423px" width="13" height="17" viewBox="0 0 13 17"><path d="M0 0 H8 L13 5 V17 H0Z" fill="#00aeef"/><path d="M8 0 V5 H13" fill="#fff" opacity=".8"/><path d="M2.5 7.5 H10.5 M2.5 10 H10.5 M2.5 12.5 H10.5 M2.5 15 H10.5" stroke="#fff" stroke-width="1"/></svg>
<div style="position:absolute;left:132px;top:423px;white-space:pre;line-height:17px;font-size:13.5px">Files</div>
<svg style="position:absolute;left:183px;top:423px" width="16" height="16" viewBox="0 0 16 16"><rect x="0" y="7" width="8" height="8" fill="#0071c5"/><rect x="4" y="4" width="7" height="7" fill="#0071c5" stroke="#e2e2e2" stroke-width="1"/><rect x="8" y="0" width="8" height="8" fill="#0071c5" stroke="#e2e2e2" stroke-width="1"/></svg>
<div style="position:absolute;left:203px;top:423px;white-space:pre;line-height:17px;font-size:13.5px">Design Units</div>
<svg style="position:absolute;left:303px;top:426px" width="9" height="8" viewBox="0 0 9 8"><rect x="2" y="2" width="7" height="6" fill="#f5a000"/><rect x="0" y="1" width="3" height="1.5" fill="#0071c5"/><rect x="5" y="0" width="1.5" height="2" fill="#0071c5"/></svg>
<div style="position:absolute;left:321px;top:423px;white-space:pre;line-height:17px;font-size:13.5px">IP Components</div>
<svg style="position:absolute;left:205px;top:449px" width="18" height="1" viewBox="0 0 18 1"><rect x="0" y="0" width="1" height="1" fill="#aaa"/><rect x="3" y="0" width="1" height="1" fill="#aaa"/><rect x="6" y="0" width="1" height="1" fill="#aaa"/><rect x="9" y="0" width="1" height="1" fill="#aaa"/><rect x="12" y="0" width="1" height="1" fill="#aaa"/><rect x="15" y="0" width="1" height="1" fill="#aaa"/></svg>
<div style="position:absolute;left:0px;top:453px;width:423px;height:1px;background:#d0d0d0"></div>
<div style="position:absolute;left:0px;top:454px;width:423px;height:22px;background:#efefef"></div>
<div style="position:absolute;left:1px;top:457px;white-space:pre;line-height:17px">Tasks</div>
<div style="position:absolute;left:374px;top:457px;width:16px;height:16px;background:#dcdcdc;border:1px solid #c2c2c2;border-radius:3px"></div><svg style="position:absolute;left:379px;top:460px" width="8" height="10" viewBox="0 0 8 10"><path d="M3.5 5 V10" stroke="#444" stroke-width="1.1"/><path d="M0.5 5.3 H7" stroke="#444" stroke-width="1.1"/><path d="M2.5 5 V1.5 Q2.5 0.5 3.5 0.5 Q4.5 0.5 4.5 1.5 V5" stroke="#444" stroke-width="1" fill="none"/></svg><svg style="position:absolute;left:393px;top:460px" width="11" height="11" viewBox="0 0 11 11"><rect x="0.6" y="0.6" width="9.8" height="9.8" rx="2" fill="none" stroke="#6a6a6a" stroke-width="1.1"/><rect x="4.5" y="2.5" width="4" height="4" rx=".8" fill="none" stroke="#6a6a6a" stroke-width="1"/><rect x="2.5" y="4.5" width="4" height="4" rx=".8" fill="#efefef" stroke="#6a6a6a" stroke-width="1"/></svg><svg style="position:absolute;left:409px;top:460px" width="11" height="11" viewBox="0 0 11 11"><rect x="0.6" y="0.6" width="9.8" height="9.8" rx="2" fill="none" stroke="#6a6a6a" stroke-width="1.1"/><path d="M3 3 L8 8 M8 3 L3 8" stroke="#4a4a4a" stroke-width="2"/></svg>
<div style="position:absolute;left:0px;top:476px;width:424px;height:1px;background:#bdbdbd"></div>
<div style="position:absolute;left:0px;top:477px;width:409px;height:247px;background:#fff"></div>
<div style="position:absolute;left:409px;top:477px;width:14px;height:247px;background:#e3e3e3;border-left:1px solid #d0d0d0"></div><div style="position:absolute;left:409px;top:477px;width:14px;height:15px;background:#f7f7f7;border-left:1px solid #d0d0d0;border-bottom:1px solid #d6d6d6"></div><svg style="position:absolute;left:412px;top:482px" width="8" height="5" viewBox="0 0 8 5"><path d="M0 4.5 L4 0 L8 4.5Z" fill="#555"/></svg><div style="position:absolute;left:409px;top:491px;width:14px;height:101px;background:#fafafa;border-left:1px solid #d0d0d0;border-bottom:1px solid #d6d6d6"></div><div style="position:absolute;left:409px;top:709px;width:14px;height:15px;background:#f7f7f7;border-left:1px solid #d0d0d0;border-top:1px solid #d6d6d6"></div><svg style="position:absolute;left:412px;top:714px" width="8" height="5" viewBox="0 0 8 5"><path d="M0 0 L4 4.5 L8 0Z" fill="#555"/></svg>
<div style="position:absolute;left:0px;top:724px;width:424px;height:1px;background:#c6c6c6"></div>
<div style="position:absolute;left:0;top:0;width:409px;height:723px;overflow:hidden;clip-path:inset(477px 0 0 0)"><div style="position:absolute;left:3px;top:479px;white-space:pre;line-height:17px;font-weight:bold;letter-spacing:-0.3px">Project</div><svg style="position:absolute;left:23px;top:498px" width="17" height="17" viewBox="0 0 17 17"><path d="M9.5 0 H16.5 V7.5 H14 V2.5 H9.5Z" fill="#0071c5"/><path d="M5 4 H12.5 V11.5 H10 V6.5 H5Z" fill="#0071c5"/><rect x="0" y="8.5" width="8" height="8" fill="#0071c5"/><rect x="3" y="10.5" width="1.5" height="5" fill="#fff"/></svg><div style="position:absolute;left:45px;top:498px;white-space:pre;line-height:17px">Revisions...</div><div style="position:absolute;left:3px;top:517px;white-space:pre;line-height:17px;font-weight:bold;letter-spacing:-0.3px">Project Files</div><svg style="position:absolute;left:25px;top:536px" width="13" height="17" viewBox="0 0 13 17"><path d="M1 0 H8 L12.5 4.5 V15.5 Q12.5 16.5 11.5 16.5 H1 Q0 16.5 0 15.5 V1 Q0 0 1 0Z" fill="#00aeef"/><path d="M7.8 0.3 V4.8 H12.3" stroke="#fff" stroke-width="1" fill="none"/></svg><div style="position:absolute;left:45px;top:536px;white-space:pre;line-height:17px">New...</div><svg style="position:absolute;left:23px;top:556px" width="17" height="16" viewBox="0 0 17 16"><g transform="scale(0.64)"><path d="M1 2 Q1 0 3 0 H9.5 L11.5 2 H23 Q25 2 25 4 V8 H1Z" fill="#f5a000"/><path d="M2.5 6.5 H26 L23.5 23.5 Q23 25 21.5 25 H2 Q0 25 0 23Z" fill="#f5a000" stroke="#fff" stroke-width="1.5"/><path d="M4.5 23 Q6 15 13 14 Q17 13.5 19.5 16" stroke="#fff" stroke-width="2.4" fill="none"/><path d="M16 15.5 L21.5 13.5 L21 19.5Z" fill="#fff"/></g></svg><div style="position:absolute;left:45px;top:555px;white-space:pre;line-height:17px">Open...</div><svg style="position:absolute;left:23px;top:574px" width="17" height="16" viewBox="0 0 17 16"><path d="M0 0 H6 L9 3 V11 H0Z" fill="#00aeef"/><path d="M4 5 H10 L13 8 V16 H4Z" fill="#00aeef" stroke="#fff" stroke-width=".8"/><circle cx="12.5" cy="3.5" r="3.3" fill="#b5cc00"/><path d="M12.5 1.5 V5.5 M10.5 3.5 H14.5" stroke="#fff" stroke-width="1.2"/><circle cx="12.5" cy="12" r="3.6" fill="#f04e23"/><path d="M10.8 10.3 L14.2 13.7 M14.2 10.3 L10.8 13.7" stroke="#fff" stroke-width="1.1"/></svg><div style="position:absolute;left:45px;top:574px;white-space:pre;line-height:17px">Add/Remove Files in Project...</div><svg style="position:absolute;left:23px;top:593px" width="17" height="17" viewBox="0 0 17 17"><g transform="translate(0,-0.6) scale(0.64)"><rect x="6" y="1" width="11" height="10.5" fill="#0071c5"/><circle cx="11.5" cy="6.3" r="2.1" fill="#fff"/><path d="M11.5 11.5 V14.3 M5 14.3 H18 M5 14.3 V16.5 M18 14.3 V16.5" stroke="#0071c5" stroke-width="1.4" fill="none"/><rect x="1" y="16.5" width="9" height="8.5" fill="#0071c5"/><rect x="12" y="16.5" width="9.5" height="8.5" fill="#0071c5"/><path d="M1 21 H22" stroke="#f5a000" stroke-width="3"/><path d="M21 16.5 L26.5 21 L21 25.5Z" fill="#f5a000"/></g></svg><div style="position:absolute;left:45px;top:593px;white-space:pre;line-height:17px">Platform Designer</div><svg style="position:absolute;left:23px;top:612px" width="17" height="17" viewBox="0 0 17 17"><g transform="translate(-0.5,-3) scale(0.62)"><path d="M2 5.5 H16.5 V10 H9 V14.5 H2Z" fill="#f5a000"/><rect x="19.5" y="8.5" width="5.5" height="19.5" fill="#0071c5"/><rect x="2" y="20" width="16" height="7.5" fill="#0071c5"/><rect x="9" y="15.5" width="9" height="5" fill="#0071c5"/><g fill="#0071c5"><rect x="25" y="13" width="1.5" height="3"/><rect x="25" y="22" width="1.5" height="3"/><rect x="0.5" y="22" width="1.5" height="3"/><rect x="8.5" y="27.5" width="3" height="1.5"/><rect x="21" y="28" width="3" height="1.5"/><rect x="13" y="3.5" width="2" height="2"/></g><rect x="0.5" y="8" width="1.5" height="3" fill="#0071c5"/></g></svg><div style="position:absolute;left:45px;top:612px;white-space:pre;line-height:17px">IP Catalog</div><div style="position:absolute;left:3px;top:631px;white-space:pre;line-height:17px;font-weight:bold;letter-spacing:-0.3px">Assignments</div><svg style="position:absolute;left:23px;top:650px" width="17" height="16" viewBox="0 0 17 16"><path d="M4.5 0 L9 4.5 L4.5 9 L0 4.5Z" fill="#0071c5"/><path d="M6 12 L7 9.5 L13.5 3 L15.5 5 L9 11.5Z" fill="#f5a000" stroke="#fff" stroke-width=".6"/><path d="M13.5 3 L14.3 2.2 Q15 1.5 15.8 2.2 Q16.5 3 15.8 3.8 L15.5 5Z" fill="#f04e23"/><rect x="5" y="12.5" width="7" height="1.3" fill="#0071c5"/><rect x="5" y="14.7" width="7" height="1.3" fill="#0071c5"/></svg><div style="position:absolute;left:45px;top:650px;white-space:pre;line-height:17px">Device...</div><svg style="position:absolute;left:23px;top:669px" width="16" height="16" viewBox="0 0 16 16"><path d="M4 12 L5 9.5 L12 2.5 L14 4.5 L7 11.5Z" fill="#f5a000"/><path d="M12 2.5 L13 1.5 Q14 0.5 15 1.5 Q16 2.5 15 3.5 L14 4.5Z" fill="#f04e23"/><path d="M4 12 L4.6 10.3 L5.8 11.4Z" fill="#333"/><rect x="1" y="12.5" width="7" height="1.3" fill="#0071c5"/><rect x="1" y="14.7" width="7" height="1.3" fill="#0071c5"/></svg><div style="position:absolute;left:45px;top:669px;white-space:pre;line-height:17px">Settings...</div><svg style="position:absolute;left:23px;top:688px" width="16" height="16" viewBox="0 0 16 16"><path d="M6 1 Q7 0 8 1 L15 8 Q16 9 15 10 L9 16 Q8 16.5 7 16 L2 11Z" fill="#0071c5"/><path d="M6 10 L7 7.5 L13 1.5 L15 3.5 L9 9.5Z" fill="#f5a000" stroke="#fff" stroke-width=".7"/><path d="M0 7 H7 L9.5 10 L7 13 H0Z" fill="#00aeef" stroke="#fff" stroke-width=".7"/><rect x="3" y="8.5" width="1.2" height="1.2" fill="#fff"/><rect x="3" y="10.3" width="1.2" height="2" fill="#fff"/></svg><div style="position:absolute;left:45px;top:688px;white-space:pre;line-height:17px">Pin Planner</div><svg style="position:absolute;left:23px;top:707px" width="16" height="16" viewBox="0 0 16 16"><path d="M6.5 0.5 Q8 -0.5 9.5 0.5 L15.5 6.5 Q16.5 8 15.5 9.5 L9.5 15.5 Q8 16.5 6.5 15.5 L0.5 9.5 Q-0.5 8 0.5 6.5Z" fill="#0071c5"/><path d="M5 10 L6 7.5 L12 1.5 L14 3.5 L8 9.5Z" fill="#f5a000" stroke="#fff" stroke-width=".7"/><rect x="4" y="10.5" width="7" height="1.2" fill="#fff"/><rect x="4" y="12.5" width="7" height="1.2" fill="#fff"/></svg><div style="position:absolute;left:45px;top:707px;white-space:pre;line-height:17px">Assignment Editor</div></div>
<div style="position:absolute;left:430px;top:124px;width:583px;height:1px;background:#c4c4c4"></div>
<div style="position:absolute;left:430px;top:96px;width:212px;height:29px;background:#dfdfdf;border:1px solid #c4c4c4;border-bottom:none;border-radius:3px 3px 0 0"></div>
<svg style="position:absolute;left:442px;top:103px" width="17" height="13" viewBox="0 0 17 13"><path d="M1.5 12 Q-1 7 2.5 3.5 Q5 0.5 8.5 0.5 Q12 0.5 14.5 3.5 Q18 7 15.5 12 L11 10 Q10 8 8.5 8 Q7 8 6 10Z" fill="#0071c5"/><g fill="#fff"><circle cx="3" cy="8" r=".8"/><circle cx="4.5" cy="4" r=".8"/><circle cx="8.5" cy="2.5" r=".8"/><circle cx="12.5" cy="4" r=".8"/><circle cx="14" cy="8" r=".8"/></g><path d="M7 12 L12 5.5" stroke="#0b3e77" stroke-width="2"/></svg>
<div style="position:absolute;left:463px;top:103px;white-space:pre;font-size:13.3px;line-height:17px">Compilation Dashboard</div>
<svg style="position:absolute;left:613px;top:105px" width="11" height="11" viewBox="0 0 11 11"><path d="M1.5 1.5 L9.5 9.5 M9.5 1.5 L1.5 9.5" stroke="#8a8a8a" stroke-width="2.4"/><path d="M1.5 1.5 L9.5 9.5 M9.5 1.5 L1.5 9.5" stroke="#dcdcdc" stroke-width=".6"/></svg>
<div style="position:absolute;left:642px;top:95px;width:106px;height:30px;background:#f6f6f6;border:1px solid #c4c4c4;border-bottom:none;border-radius:3px 3px 0 0"></div>
<svg style="position:absolute;left:653px;top:101px" width="17" height="17" viewBox="0 0 17 17"><path d="M7.3 1.2 Q8.5 0 9.7 1.2 L15.8 7.3 Q17 8.5 15.8 9.7 L9.7 15.8 Q8.5 17 7.3 15.8 L1.2 9.7 Q0 8.5 1.2 7.3Z" fill="#0071c5"/><text x="8.5" y="11.5" font-family="Liberation Sans" font-size="8.5" fill="#fff" text-anchor="middle">abc</text></svg>
<div style="position:absolute;left:676px;top:102px;white-space:pre;font-size:13.5px;line-height:17px">top.sv</div>
<svg style="position:absolute;left:720px;top:105px" width="11" height="11" viewBox="0 0 11 11"><path d="M1.5 1.5 L9.5 9.5 M9.5 1.5 L1.5 9.5" stroke="#8a8a8a" stroke-width="2.4"/><path d="M1.5 1.5 L9.5 9.5 M9.5 1.5 L1.5 9.5" stroke="#dcdcdc" stroke-width=".6"/></svg>
<div style="position:absolute;left:430px;top:125px;width:583px;height:40px;background:linear-gradient(#f9f9f9,#f2f2f2)"></div>
<div style="position:absolute;left:430px;top:125px;width:1px;height:542px;background:#b8b8b8"></div>
<svg style="position:absolute;left:436px;top:137px" width="4" height="18" viewBox="0 0 4 18"><rect x="0" y="0" width="1" height="1" fill="#b8b8b8"/><rect x="3" y="0" width="1" height="1" fill="#b8b8b8"/><rect x="0" y="3" width="1" height="1" fill="#b8b8b8"/><rect x="3" y="3" width="1" height="1" fill="#b8b8b8"/><rect x="0" y="6" width="1" height="1" fill="#b8b8b8"/><rect x="3" y="6" width="1" height="1" fill="#b8b8b8"/><rect x="0" y="9" width="1" height="1" fill="#b8b8b8"/><rect x="3" y="9" width="1" height="1" fill="#b8b8b8"/><rect x="0" y="12" width="1" height="1" fill="#b8b8b8"/><rect x="3" y="12" width="1" height="1" fill="#b8b8b8"/><rect x="0" y="15" width="1" height="1" fill="#b8b8b8"/><rect x="3" y="15" width="1" height="1" fill="#b8b8b8"/></svg>
<svg style="position:absolute;left:446px;top:133px" width="27" height="27" viewBox="0 0 27 27"><rect x="1" y="1" width="23.5" height="13.5" rx="1.5" fill="#0071c5"/><rect x="16.5" y="9.5" width="10" height="7.5" rx="1" fill="#0071c5" stroke="#f6f6f6" stroke-width="1.2"/><path d="M5.5 17.5 Q7 25.5 14 25 Q18 24.5 20.5 21" stroke="#f5a000" stroke-width="2.4" fill="none"/><path d="M17.5 19.5 L23.5 18 L22.5 24.5Z" fill="#f5a000"/></svg>
<div style="position:absolute;left:480px;top:137px;width:1px;height:20px;background:#d0d0d0"></div>
<svg style="position:absolute;left:487px;top:134px" width="27" height="25" viewBox="0 0 27 25"><path d="M3.5 5 Q3.5 2 7 2 Q10.5 2 10.5 5 V7.5 H15.5 V5 Q15.5 2 19 2 Q22.5 2 22.5 5 L25.5 15 Q26 17 24 18 H2 Q0 17 0.5 15Z" fill="#0071c5"/><circle cx="7" cy="17.2" r="4.7" fill="#fff" stroke="#0071c5" stroke-width="1.6"/><circle cx="20" cy="17.2" r="4.7" fill="#fff" stroke="#0071c5" stroke-width="1.6"/><rect x="11.5" y="12" width="4" height="1.2" fill="#fff"/></svg>
<svg style="position:absolute;left:522px;top:134px" width="26" height="25" viewBox="0 0 26 25"><path d="M6.5 3 Q3.5 3 3.5 6 V10.5 Q3.5 12.5 1 12.5 Q3.5 12.5 3.5 14.5 V19 Q3.5 22 6.5 22 M19 3 Q22 3 22 6 V10.5 Q22 12.5 24.5 12.5 Q22 12.5 22 14.5 V19 Q22 22 19 22" stroke="#0071c5" stroke-width="1.7" fill="none"/><path d="M8 12.5 H14" stroke="#f5a000" stroke-width="2.4"/><path d="M12.5 8.5 L17.5 12.5 L12.5 16.5Z" fill="#f5a000"/></svg>
<div style="position:absolute;left:555px;top:137px;width:1px;height:20px;background:#d0d0d0"></div>
<svg style="position:absolute;left:562px;top:134px" width="28" height="25" viewBox="0 0 28 25"><g fill="#0071c5"><rect x="2.5" y="1.6" width="23.5" height="3" rx="1.5"/><rect x="13.5" y="8" width="12.5" height="3" rx="1.5"/><rect x="13.5" y="14.2" width="12.5" height="3" rx="1.5"/><rect x="2.5" y="20.4" width="23.5" height="3" rx="1.5"/></g><path d="M1 12.5 H7" stroke="#f5a000" stroke-width="2.2" stroke-linecap="round"/><path d="M5.5 8 L11.5 12.5 L5.5 17Z" fill="#f5a000"/></svg>
<svg style="position:absolute;left:596px;top:134px" width="28" height="25" viewBox="0 0 28 25"><g fill="#0071c5"><rect x="2.8" y="1.6" width="23.2" height="3" rx="1.5"/><rect x="13.6" y="8" width="12.4" height="3" rx="1.5"/><rect x="13.6" y="14.2" width="12.4" height="3" rx="1.5"/><rect x="2.8" y="20.4" width="23.2" height="3" rx="1.5"/></g><path d="M6 12.5 H12" stroke="#f5a000" stroke-width="2.2" stroke-linecap="round"/><path d="M1 12.5 L7 8 L7 17Z" fill="#f5a000"/></svg>
<div style="position:absolute;left:631px;top:137px;width:1px;height:20px;background:#d0d0d0"></div>
<svg style="position:absolute;left:641px;top:133px" width="23" height="27" viewBox="0 0 23 27"><g transform="translate(0,0)"><path d="M0 6.5 H12 L19.5 14 V24.5 Q19.5 26 18 26 H1.5 Q0 26 0 24.5Z" fill="#00aeef"/><path d="M3 6 V18.5 L7 14.5 L11 18.5 V6" stroke="#fff" stroke-width="1.1" fill="none"/><path d="M12.5 6.5 V13.5 H19.5" stroke="#fff" stroke-width="1.1" fill="none"/></g></svg>
<svg style="position:absolute;left:675px;top:133px" width="23" height="27" viewBox="0 0 23 27"><g transform="translate(0,0)"><path d="M0 6.5 H12 L19.5 14 V24.5 Q19.5 26 18 26 H1.5 Q0 26 0 24.5Z" fill="#00aeef"/><path d="M3 6 V18.5 L7 14.5 L11 18.5 V6" stroke="#fff" stroke-width="1.1" fill="none"/><path d="M12.5 6.5 V13.5 H19.5" stroke="#fff" stroke-width="1.1" fill="none"/></g><path d="M10 6.5 H20" stroke="#f5a000" stroke-width="2.6"/><path d="M16.5 1.5 L21.5 6.5 L16.5 11.5Z" fill="#f5a000"/></svg>
<svg style="position:absolute;left:706px;top:133px" width="23" height="27" viewBox="0 0 23 27"><g transform="translate(3,0)"><path d="M0 6.5 H12 L19.5 14 V24.5 Q19.5 26 18 26 H1.5 Q0 26 0 24.5Z" fill="#00aeef"/><path d="M3 6 V18.5 L7 14.5 L11 18.5 V6" stroke="#fff" stroke-width="1.1" fill="none"/><path d="M12.5 6.5 V13.5 H19.5" stroke="#fff" stroke-width="1.1" fill="none"/></g><path d="M3 6.5 H12" stroke="#f5a000" stroke-width="2.6"/><path d="M5.5 1.5 L0.5 6.5 L5.5 11.5Z" fill="#f5a000"/></svg>
<div style="position:absolute;left:740px;top:137px;width:1px;height:20px;background:#d0d0d0"></div>
<svg style="position:absolute;left:746px;top:134px" width="26" height="26" viewBox="0 0 26 26"><g transform="translate(13,13) rotate(-45) translate(-7,-14)"><path d="M2 8 V21 A5 5 0 0 0 12 21 V5 A3.5 3.5 0 0 0 5 5 V19.5 A1.8 1.8 0 0 0 8.6 19.5 V8" stroke="#0071c5" stroke-width="2.2" fill="none" stroke-linecap="round"/></g></svg>
<svg style="position:absolute;left:779px;top:134px" width="29" height="25" viewBox="0 0 29 25"><path d="M2 4.5 Q1.5 2.5 3.5 2.5 H21 L26.5 20 Q27 22 25 22 H8.5 Q6.8 22 6.3 20.5Z" fill="#00aeef"/><rect x="6.5" y="2.5" width="16.5" height="3.6" rx="1.8" fill="#0a64bf"/><path d="M8.5 11.3 H20" stroke="#fff" stroke-width="1.7"/><path d="M10.5 17.3 H23.5" stroke="#fff" stroke-width="1.7"/></svg>
<div style="position:absolute;left:815px;top:137px;width:1px;height:20px;background:#d0d0d0"></div>
<div style="position:absolute;left:822px;top:133px;white-space:pre;font-size:13.5px;line-height:13px;color:#1f76c5">267</div>
<div style="position:absolute;left:822px;top:146px;white-space:pre;font-size:13.5px;line-height:13px;color:#1f76c5">268</div>
<svg style="position:absolute;left:857px;top:135px" width="24" height="23" viewBox="0 0 24 23"><rect x="0.5" y="1" width="22.5" height="2.7" rx="1.3" fill="#0071c5"/><rect x="0.5" y="7" width="22.5" height="2.7" rx="1.3" fill="#b0b0b0"/><rect x="0.5" y="13" width="22.5" height="2.7" rx="1.3" fill="#b0b0b0"/><rect x="0.5" y="19" width="22.5" height="2.7" rx="1.3" fill="#0071c5"/></svg>
<div style="position:absolute;left:890px;top:137px;width:1px;height:20px;background:#d0d0d0"></div>
<svg style="position:absolute;left:896px;top:134px" width="27" height="25" viewBox="0 0 27 25"><path d="M0 3 L11 9 L0 14Z" fill="#8c8c8c"/><path d="M6 23 Q10 8 26 2 Q24 16 10 19" fill="#8c8c8c"/><path d="M5 24 L20 8" stroke="#f4f4f4" stroke-width="1.2"/></svg>
<div style="position:absolute;left:430px;top:164px;width:583px;height:1px;background:#b8b8b8"></div>
<div style="position:absolute;left:431px;top:165px;width:582px;height:487px;background:#fff"></div>
<div style="position:absolute;left:431px;top:165px;width:47px;height:487px;background:#e4e4dc"></div>
<div style="position:absolute;left:478px;top:165px;width:14px;height:487px;background-color:#fff;background-image:linear-gradient(45deg,#dcdcdc 25%,transparent 25%,transparent 75%,#dcdcdc 75%),linear-gradient(45deg,#dcdcdc 25%,transparent 25%,transparent 75%,#dcdcdc 75%);background-size:2px 2px;background-position:0 0,1px 1px"></div>
<div style="position:absolute;left:0;top:0;width:1013px;height:652px;overflow:hidden;clip-path:inset(165px 0 0 431px)"><div style="position:absolute;left:436px;top:168px;white-space:pre;font-family:Liberation Mono;font-size:13px;line-height:18px;color:#1a1a1a">724</div><div style="position:absolute;left:493px;top:168px;white-space:pre;font-family:Liberation Mono;font-size:13px;line-height:18px;color:#111">      .clk         (clk_csr),</div><div style="position:absolute;left:436px;top:186px;white-space:pre;font-family:Liberation Mono;font-size:13px;line-height:18px;color:#1a1a1a">725</div><div style="position:absolute;left:493px;top:186px;white-space:pre;font-family:Liberation Mono;font-size:13px;line-height:18px;color:#111">      .rst_n       (rst_n_csr[<span style="color:#1515e6">SOC</span>]),</div><div style="position:absolute;left:436px;top:204px;white-space:pre;font-family:Liberation Mono;font-size:13px;line-height:18px;color:#1a1a1a">726</div><div style="position:absolute;left:493px;top:204px;white-space:pre;font-family:Liberation Mono;font-size:13px;line-height:18px;color:#111">      .csr_lite_if (bpf_emif_slv_if)</div><div style="position:absolute;left:436px;top:222px;white-space:pre;font-family:Liberation Mono;font-size:13px;line-height:18px;color:#1a1a1a">727</div><div style="position:absolute;left:493px;top:222px;white-space:pre;font-family:Liberation Mono;font-size:13px;line-height:18px;color:#111">   );</div><div style="position:absolute;left:436px;top:240px;white-space:pre;font-family:Liberation Mono;font-size:13px;line-height:18px;color:#1a1a1a">728</div><div style="position:absolute;left:493px;top:240px;white-space:pre;font-family:Liberation Mono;font-size:13px;line-height:18px;color:#111">`endif</div><div style="position:absolute;left:436px;top:258px;white-space:pre;font-family:Liberation Mono;font-size:13px;line-height:18px;color:#1a1a1a">729</div><div style="position:absolute;left:493px;top:258px;white-space:pre;font-family:Liberation Mono;font-size:13px;line-height:18px;color:#111"></div><div style="position:absolute;left:436px;top:276px;white-space:pre;font-family:Liberation Mono;font-size:13px;line-height:18px;color:#1a1a1a">730</div><div style="position:absolute;left:493px;top:276px;white-space:pre;font-family:Liberation Mono;font-size:13px;line-height:18px;color:#111"><span style="color:#228b22">//*******************************</span></div><div style="position:absolute;left:436px;top:294px;white-space:pre;font-family:Liberation Mono;font-size:13px;line-height:18px;color:#1a1a1a">731</div><div style="position:absolute;left:493px;top:294px;white-space:pre;font-family:Liberation Mono;font-size:13px;line-height:18px;color:#111"><span style="color:#228b22">// </span><span style="background:#4a6db5;color:#fff;outline:1px solid #3a5a9a;outline-offset:-1px;padding:2px 0 1px">Hello</span><span style="color:#228b22"> FIM Subsystem</span></div><div style="position:absolute;left:436px;top:312px;white-space:pre;font-family:Liberation Mono;font-size:13px;line-height:18px;color:#1a1a1a">732</div><div style="position:absolute;left:493px;top:312px;white-space:pre;font-family:Liberation Mono;font-size:13px;line-height:18px;color:#111"><span style="color:#228b22">//*******************************</span></div><div style="position:absolute;left:436px;top:330px;white-space:pre;font-family:Liberation Mono;font-size:13px;line-height:18px;color:#1a1a1a">733</div><div style="position:absolute;left:493px;top:330px;white-space:pre;font-family:Liberation Mono;font-size:13px;line-height:18px;color:#111"></div><div style="position:absolute;left:436px;top:348px;white-space:pre;font-family:Liberation Mono;font-size:13px;line-height:18px;color:#1a1a1a">734</div><div style="position:absolute;left:493px;top:348px;white-space:pre;font-family:Liberation Mono;font-size:13px;line-height:18px;color:#111">`ifdef <span style="color:#1515e6">INCLUDE_</span><span style="background:#b9d5ec;border-radius:3px;padding:1px 0;color:#1515e6;">HELLO</span><span style="color:#1515e6">_FIM</span></div><div style="position:absolute;left:436px;top:366px;white-space:pre;font-family:Liberation Mono;font-size:13px;line-height:18px;color:#1a1a1a">735</div><div style="position:absolute;left:493px;top:366px;white-space:pre;font-family:Liberation Mono;font-size:13px;line-height:18px;color:#111"><span style="background:#b9d5ec;border-radius:3px;padding:1px 0;">hello</span>_fim_top #(</div><div style="position:absolute;left:436px;top:384px;white-space:pre;font-family:Liberation Mono;font-size:13px;line-height:18px;color:#1a1a1a">736</div><div style="position:absolute;left:493px;top:384px;white-space:pre;font-family:Liberation Mono;font-size:13px;line-height:18px;color:#111">   .ADDR_WIDTH       (<span style="color:#ff4a0a">12</span>),</div><div style="position:absolute;left:436px;top:402px;white-space:pre;font-family:Liberation Mono;font-size:13px;line-height:18px;color:#1a1a1a">737</div><div style="position:absolute;left:493px;top:402px;white-space:pre;font-family:Liberation Mono;font-size:13px;line-height:18px;color:#111">   .DATA_WIDTH       (<span style="color:#ff4a0a">64</span>),</div><div style="position:absolute;left:436px;top:420px;white-space:pre;font-family:Liberation Mono;font-size:13px;line-height:18px;color:#1a1a1a">738</div><div style="position:absolute;left:493px;top:420px;white-space:pre;font-family:Liberation Mono;font-size:13px;line-height:18px;color:#111">   .FEAT_ID          (<span style="color:#ff4a0a">12'h100</span>),</div><div style="position:absolute;left:436px;top:438px;white-space:pre;font-family:Liberation Mono;font-size:13px;line-height:18px;color:#1a1a1a">739</div><div style="position:absolute;left:493px;top:438px;white-space:pre;font-family:Liberation Mono;font-size:13px;line-height:18px;color:#111">   .FEAT_VER         (<span style="color:#ff4a0a">4'h0</span>),</div><div style="position:absolute;left:436px;top:456px;white-space:pre;font-family:Liberation Mono;font-size:13px;line-height:18px;color:#1a1a1a">740</div><div style="position:absolute;left:493px;top:456px;white-space:pre;font-family:Liberation Mono;font-size:13px;line-height:18px;color:#111">   .NEXT_DFH_OFFSET  (<span style="color:#ff4a0a">24'h6A000</span>),</div><div style="position:absolute;left:436px;top:474px;white-space:pre;font-family:Liberation Mono;font-size:13px;line-height:18px;color:#1a1a1a">741</div><div style="position:absolute;left:493px;top:474px;white-space:pre;font-family:Liberation Mono;font-size:13px;line-height:18px;color:#111">   .END_OF_LIST      (<span style="color:#ff4a0a">1'b0</span>)</div><div style="position:absolute;left:436px;top:492px;white-space:pre;font-family:Liberation Mono;font-size:13px;line-height:18px;color:#1a1a1a">742</div><div style="position:absolute;left:493px;top:492px;white-space:pre;font-family:Liberation Mono;font-size:13px;line-height:18px;color:#111">) <span style="background:#b9d5ec;border-radius:3px;padding:1px 0;">hello</span>_fim_top_inst (</div><div style="position:absolute;left:436px;top:510px;white-space:pre;font-family:Liberation Mono;font-size:13px;line-height:18px;color:#1a1a1a">743</div><div style="position:absolute;left:493px;top:510px;white-space:pre;font-family:Liberation Mono;font-size:13px;line-height:18px;color:#111">    .clk (clk_csr),</div><div style="position:absolute;left:436px;top:528px;white-space:pre;font-family:Liberation Mono;font-size:13px;line-height:18px;color:#1a1a1a">744</div><div style="position:absolute;left:493px;top:528px;white-space:pre;font-family:Liberation Mono;font-size:13px;line-height:18px;color:#111">    .reset(~rst_n_csr),</div><div style="position:absolute;left:436px;top:546px;white-space:pre;font-family:Liberation Mono;font-size:13px;line-height:18px;color:#1a1a1a">745</div><div style="position:absolute;left:493px;top:546px;white-space:pre;font-family:Liberation Mono;font-size:13px;line-height:18px;color:#111">   .csr_lite_if   (bpf_<span style="background:#b9d5ec;border-radius:3px;padding:1px 0;">hello</span>_fim_slv_if)</div><div style="position:absolute;left:436px;top:564px;white-space:pre;font-family:Liberation Mono;font-size:13px;line-height:18px;color:#1a1a1a">746</div><div style="position:absolute;left:493px;top:564px;white-space:pre;font-family:Liberation Mono;font-size:13px;line-height:18px;color:#111">);</div><div style="position:absolute;left:436px;top:582px;white-space:pre;font-family:Liberation Mono;font-size:13px;line-height:18px;color:#1a1a1a">747</div><div style="position:absolute;left:493px;top:582px;white-space:pre;font-family:Liberation Mono;font-size:13px;line-height:18px;color:#111">`else</div><div style="position:absolute;left:436px;top:600px;white-space:pre;font-family:Liberation Mono;font-size:13px;line-height:18px;color:#1a1a1a">748</div><div style="position:absolute;left:493px;top:600px;white-space:pre;font-family:Liberation Mono;font-size:13px;line-height:18px;color:#111">dummy_csr #(</div><div style="position:absolute;left:436px;top:618px;white-space:pre;font-family:Liberation Mono;font-size:13px;line-height:18px;color:#1a1a1a">749</div><div style="position:absolute;left:493px;top:618px;white-space:pre;font-family:Liberation Mono;font-size:13px;line-height:18px;color:#111">   .FEAT_ID          (<span style="color:#ff4a0a">12'h100</span>),</div><div style="position:absolute;left:436px;top:636px;white-space:pre;font-family:Liberation Mono;font-size:13px;line-height:18px;color:#1a1a1a">750</div><div style="position:absolute;left:493px;top:636px;white-space:pre;font-family:Liberation Mono;font-size:13px;line-height:18px;color:#111">   .FEAT_VER         (<span style="color:#ff4a0a">4'h0</span>),</div><div style="position:absolute;left:485px;top:165px;width:1px;height:65px;background:#111"></div><div style="position:absolute;left:485px;top:229px;width:7px;height:1px;background:#111"></div><div style="position:absolute;left:480px;top:369px;width:11px;height:11px;background:#fff;border:1px solid #111"></div><div style="position:absolute;left:482px;top:374px;width:7px;height:1px;background:#111"></div><div style="position:absolute;left:485px;top:380px;width:1px;height:192px;background:#111"></div><div style="position:absolute;left:485px;top:572px;width:7px;height:1px;background:#111"></div><div style="position:absolute;left:480px;top:603px;width:11px;height:11px;background:#fff;border:1px solid #111"></div><div style="position:absolute;left:482px;top:608px;width:7px;height:1px;background:#111"></div><div style="position:absolute;left:485px;top:614px;width:1px;height:40px;background:#111"></div></div>
<div style="position:absolute;left:431px;top:652px;width:582px;height:15px;background:linear-gradient(#fbfbfb,#f0f0f0);border-top:1px solid #d0d0d0;border-bottom:1px solid #b8b8b8"></div>
<div style="position:absolute;left:431px;top:652px;width:14px;height:15px;background:#f9f9f9;border-top:1px solid #d0d0d0;border-right:1px solid #c8c8c8;border-bottom:1px solid #b8b8b8"></div>
<svg style="position:absolute;left:435px;top:655px" width="5" height="9" viewBox="0 0 5 9"><path d="M5 0 L0 4.5 L5 9Z" fill="#555"/></svg>
<div style="position:absolute;left:430px;top:673px;width:583px;height:52px;background:#efefef;border-top:1px solid #c4c4c4;border-bottom:1px solid #c4c4c4;border-left:1px solid #c4c4c4"></div>
<div style="position:absolute;left:453px;top:674px;width:1px;height:50px;background:#c4c4c4"></div>
<div style="position:absolute;left:454px;top:674px;width:1px;height:50px;background:#f8f8f8"></div>
<svg style="position:absolute;left:436px;top:679px" width="12" height="12" viewBox="0 0 12 12"><rect x="0.5" y="0.5" width="11" height="11" rx="2" fill="none" stroke="#666"/><path d="M3 3 L9 9 M9 3 L3 9" stroke="#444" stroke-width="1.8"/></svg>
<div style="position:absolute;left:434px;top:723px;transform:rotate(-90deg);transform-origin:0 0;white-space:pre;font-size:13.5px;line-height:16px">Find</div>
<div style="position:absolute;left:463px;top:691px;white-space:pre;font-size:13.5px;line-height:17px">Find what:</div>
<div style="position:absolute;left:530px;top:687px;width:150px;height:25px;background:#fff;border:1px solid #b8b8b8;border-radius:3px"></div>
<div style="position:absolute;left:659px;top:688px;width:1px;height:23px;background:#d0d0d0"></div>
<div style="position:absolute;left:535px;top:691px;white-space:pre;font-size:13.5px;line-height:17px">hello</div>
<svg style="position:absolute;left:665px;top:697px" width="9" height="5" viewBox="0 0 9 5"><path d="M0 0 H9 L4.5 5Z" fill="#555"/></svg>
<svg style="position:absolute;left:694px;top:696px" width="14" height="14" viewBox="0 0 14 14"><path d="M0 1 H10 M0 4.5 H10 M0 8 H10" stroke="#333" stroke-width="1.5"/><path d="M7 11 H12 L9.5 13.5Z" fill="#333"/></svg>
<div style="position:absolute;left:718px;top:691px;white-space:pre;font-size:13.5px;line-height:17px">Look in:</div>
<div style="position:absolute;left:770px;top:687px;width:120px;height:25px;background:linear-gradient(#fdfdfd,#f0f0f0);border:1px solid #b8b8b8;border-radius:3px"></div>
<div style="position:absolute;left:775px;top:691px;white-space:pre;font-size:13.5px;line-height:17px">Current file</div>
<svg style="position:absolute;left:874px;top:697px" width="9" height="5" viewBox="0 0 9 5"><path d="M0 0 H9 L4.5 5Z" fill="#555"/></svg>
<div style="position:absolute;left:906px;top:691px;white-space:pre;font-size:13.5px;line-height:17px">Search:</div>
<div style="position:absolute;left:956px;top:687px;width:70px;height:25px;background:linear-gradient(#fdfdfd,#f0f0f0);border:1px solid #b8b8b8;border-radius:3px"></div>
<div style="position:absolute;left:960px;top:691px;white-space:pre;font-size:13.5px;line-height:17px">Down</div>
<svg style="position:absolute;left:1009px;top:697px" width="9" height="5" viewBox="0 0 9 5"><path d="M0 0 H9 L4.5 5Z" fill="#555"/></svg>
<svg style="position:absolute;left:951px;top:727px" width="18" height="1" viewBox="0 0 18 1"><rect x="0" y="0" width="1" height="1" fill="#aaa"/><rect x="3" y="0" width="1" height="1" fill="#aaa"/><rect x="6" y="0" width="1" height="1" fill="#aaa"/><rect x="9" y="0" width="1" height="1" fill="#aaa"/><rect x="12" y="0" width="1" height="1" fill="#aaa"/><rect x="15" y="0" width="1" height="1" fill="#aaa"/></svg>
<svg style="position:absolute;left:427px;top:403px" width="1" height="18" viewBox="0 0 1 18"><rect x="0" y="0" width="1" height="1" fill="#aaa"/><rect x="0" y="3" width="1" height="1" fill="#aaa"/><rect x="0" y="6" width="1" height="1" fill="#aaa"/><rect x="0" y="9" width="1" height="1" fill="#aaa"/><rect x="0" y="12" width="1" height="1" fill="#aaa"/><rect x="0" y="15" width="1" height="1" fill="#aaa"/></svg>
</body></html>
